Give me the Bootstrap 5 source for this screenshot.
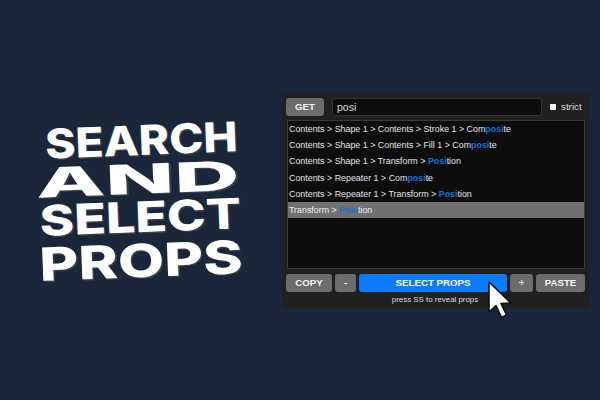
<!DOCTYPE html>
<html lang="en">
<head>
<meta charset="utf-8">
<title>Search and select props</title>
<link href="https://cdn.jsdelivr.net/npm/bootstrap@5.3.0/dist/css/bootstrap.min.css" rel="stylesheet">
<style>
html,body{width:600px;height:400px;overflow:hidden;margin:0}
body{background:#1a263a;font-family:"Liberation Sans",Arial,sans-serif;position:relative}
.stage{width:600px;height:400px;padding:93px 10px 0 0}
.headline{width:282px;height:215px;padding:27px 42px 0 0;font-family:Inter,"Liberation Sans",sans-serif;font-weight:800;color:#fff;transform:rotate(-2.2deg)}
.hl{display:block;line-height:1;white-space:nowrap;transform-origin:100% 50%;text-shadow:1px 1.5px 0 #3a3d44}
.hl1{font-size:41px;height:37px;transform:scaleX(1.12)}
.hl2{font-size:44px;height:39px;transform:scaleX(2.05) scaleY(.93)}
.hl3{font-size:42px;height:41px;transform:scaleX(1.24)}
.hl4{font-size:46px;height:42px;transform:scaleX(1.3)}
.panel{width:308px;height:215px;background:#202020;padding:5px 5px 0 4px;color:#e8e8e8;position:relative}
.gbtn{height:18px;background:#6c6c6c;color:#f4f4f4;font-size:9.7px;font-weight:700;border-radius:3px;border:0}
.w-get{width:38px}.w-copy{width:46px}.w-minus{width:21px}.w-sel{width:148px;background:#0a7bff;color:#fff}.w-plus{width:23px}.w-paste{width:49px}
.search-box{margin-left:8px;width:210px;height:18px;background:#0d0d0d;border:1px solid #333;border-radius:3px;font-size:10.5px;line-height:16px;padding-left:4px;color:#ddd}
.strict{font-size:9.8px;margin-left:8px;color:#ddd}
.sq{width:6px;height:6px;background:#fff;margin-right:5px;border-radius:1px}
.result-box{margin:4px 0 5px 1px;width:298px;height:149px;background:#0d0d0d;border:1px solid #3a3a3a}
.rrow{height:16.2px;line-height:16.2px;font-size:8.9px;padding-left:1px;color:#e4e4e4;white-space:nowrap}
.rrow b{font-weight:700;color:#1c6fd6}
.rrow.on{background:#717171;color:#eee}
.rrow.on b{color:#1d6fd0}
.caption{font-size:7.9px;color:#ddd;text-align:center;margin-top:1px;padding-right:1px;line-height:13px}
.arrow{position:absolute;left:205px;top:187px;width:26px;height:40px}
</style>
</head>
<body>
<div class="stage d-flex">
  <div class="headline d-flex flex-column align-items-end">
    <span class="hl hl1">SEARCH</span>
    <span class="hl hl2">AND</span>
    <span class="hl hl3">SELECT</span>
    <span class="hl hl4">PROPS</span>
  </div>
  <div class="panel">
    <div class="d-flex align-items-center">
      <button class="gbtn w-get p-0">GET</button>
      <div class="search-box">posi</div>
      <div class="strict d-flex align-items-center"><span class="sq"></span>strict</div>
    </div>
    <div class="result-box">
      <div class="rrow">Contents &gt; Shape 1 &gt; Contents &gt; Stroke 1 &gt; Com<b>posi</b>te</div>
      <div class="rrow">Contents &gt; Shape 1 &gt; Contents &gt; Fill 1 &gt; Com<b>posi</b>te</div>
      <div class="rrow">Contents &gt; Shape 1 &gt; Transform &gt; <b>Posi</b>tion</div>
      <div class="rrow">Contents &gt; Repeater 1 &gt; Com<b>posi</b>te</div>
      <div class="rrow">Contents &gt; Repeater 1 &gt; Transform &gt; <b>Posi</b>tion</div>
      <div class="rrow on">Transform &gt; <b>Posi</b>tion</div>
    </div>
    <div class="d-flex" style="gap:3px">
      <button class="gbtn w-copy p-0">COPY</button>
      <button class="gbtn w-minus p-0">-</button>
      <button class="gbtn w-sel p-0">SELECT PROPS</button>
      <button class="gbtn w-plus p-0">+</button>
      <button class="gbtn w-paste p-0">PASTE</button>
    </div>
    <div class="caption">press SS to reveal props</div>
    <svg class="arrow" viewBox="0 0 26 40" aria-hidden="true"><path d="M2 2 L2 32 L9 25.5 L14.5 37.5 L19.5 35 L14 23.5 L24 23 Z" fill="#fff" stroke="#111" stroke-width="1.6" stroke-linejoin="round"/></svg>
  </div>
</div>
</body>
</html>
